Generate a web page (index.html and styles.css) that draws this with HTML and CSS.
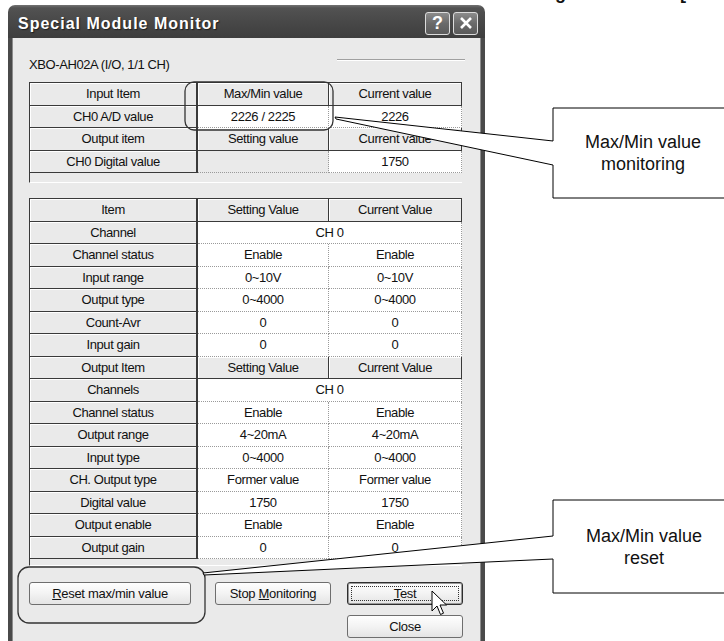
FILE: index.html
```html
<!DOCTYPE html>
<html>
<head>
<meta charset="utf-8">
<title>Special Module Monitor</title>
<link rel="stylesheet" href="styles.css">
</head>
<body>
<div class="page">
  <div class="pagehead">
    <div class="pagehead-line"><span>Monitoring</span><span>[</span></div>
  </div>
  <div class="window">
    <div class="titlebar">
      <span class="title">Special Module Monitor</span>
      <div class="tbtns">
        <span class="tbtn">?</span>
        <span class="tbtn"><svg width="22" height="21" viewBox="0 0 22 21"><path d="M6 5 L16 15 M16 5 L6 15" stroke="#fff" stroke-width="2.6" fill="none"/></svg></span>
      </div>
    </div>
    <div class="wbody">
      <div class="modrow">
        <span class="modname">XBO-AH02A (I/O, 1/1 CH)</span>
        <span class="modline"></span>
      </div>

      <div class="panel p1">
        <div class="grid">
          <div class="c g c1">Input Item</div><div class="c g">Max/Min value</div><div class="c g">Current value</div>
          <div class="c g c1">CH0 A/D value</div><div class="c w">2226 / 2225</div><div class="c w">2226</div>
          <div class="c g c1">Output item</div><div class="c g">Setting value</div><div class="c g">Current value</div>
          <div class="c g c1">CH0 Digital value</div><div class="c e"></div><div class="c w">1750</div>
        </div>
      </div>

      <div class="panel p2">
        <div class="grid">
          <div class="c g c1">Item</div><div class="c g">Setting Value</div><div class="c g">Current Value</div>
          <div class="c g c1">Channel</div><div class="c w span2">CH 0</div>
          <div class="c g c1">Channel status</div><div class="c w">Enable</div><div class="c w">Enable</div>
          <div class="c g c1">Input range</div><div class="c w">0~10V</div><div class="c w">0~10V</div>
          <div class="c g c1">Output type</div><div class="c w">0~4000</div><div class="c w">0~4000</div>
          <div class="c g c1">Count-Avr</div><div class="c w">0</div><div class="c w">0</div>
          <div class="c g c1">Input gain</div><div class="c w">0</div><div class="c w">0</div>
          <div class="c g c1">Output Item</div><div class="c g">Setting Value</div><div class="c g">Current Value</div>
          <div class="c g c1">Channels</div><div class="c w span2">CH 0</div>
          <div class="c g c1">Channel status</div><div class="c w">Enable</div><div class="c w">Enable</div>
          <div class="c g c1">Output range</div><div class="c w">4~20mA</div><div class="c w">4~20mA</div>
          <div class="c g c1">Input type</div><div class="c w">0~4000</div><div class="c w">0~4000</div>
          <div class="c g c1">CH. Output type</div><div class="c w">Former value</div><div class="c w">Former value</div>
          <div class="c g c1">Digital value</div><div class="c w">1750</div><div class="c w">1750</div>
          <div class="c g c1">Output enable</div><div class="c w">Enable</div><div class="c w">Enable</div>
          <div class="c g c1">Output gain</div><div class="c w">0</div><div class="c w">0</div>
        </div>
      </div>

      <div class="buttons">
        <div class="btn"><span><u>R</u>eset max/min value</span></div>
        <div class="btn"><span>Stop <u>M</u>onitoring</span></div>
        <div class="btn def"><span><u>T</u>est</span></div>
        <div class="btn close"><span>Close</span></div>
      </div>
    </div>
  </div>

  <svg class="callouts" width="724" height="641" viewBox="0 0 724 641">
    <rect x="185" y="82" width="148" height="48" rx="9" ry="9" fill="none" stroke="#333" stroke-width="1.3"/>
    <path d="M335 117 L553 141 L553 108 L740 108 L740 198 L553 198 L553 165 L336 119 Z" fill="#fff" stroke="#000" stroke-width="1"/>
    <rect x="18" y="567" width="187" height="56" rx="11" ry="11" fill="none" stroke="#333" stroke-width="1.3"/>
    <path d="M203 573 L553 536 L553 500 L740 500 L740 593 L553 593 L553 559 L204 575 Z" fill="#fff" stroke="#000" stroke-width="1"/>
  </svg>
  <div class="note n1">Max/Min value<br>monitoring</div>
  <div class="note n2">Max/Min value<br>reset</div>
  <svg class="cursor" width="17" height="26" viewBox="0 0 17 26">
    <path d="M1 1 L1 21 L6 16 L9.5 24.5 L12.5 23.2 L9 15 L15.5 15 Z" fill="#fff" stroke="#000" stroke-width="1"/>
  </svg>
</div>
</body>
</html>
```

FILE: styles.css
```css
* { box-sizing: border-box; }
html, body { margin: 0; padding: 0; background: #fff; }
body {
  width: 724px;
  height: 641px;
  overflow: hidden;
  font-family: "Liberation Sans", Arial, sans-serif;
}
.page {
  position: relative;
  width: 724px;
  height: 641px;
  overflow: hidden;
}
.pagehead { height: 5px; overflow: hidden; }
.pagehead-line {
  display: flex;
  margin-top: -16px;
  padding-left: 473px;
  gap: 114px;
  font: bold 18px/18px "Liberation Sans", Arial, sans-serif;
  color: #111;
  white-space: nowrap;
}
.window {
  margin-left: 8px;
  width: 477px;
  height: 640px;
  display: flex;
  flex-direction: column;
}
.titlebar {
  height: 33px;
  flex: none;
  border-radius: 7px 7px 0 0;
  background: linear-gradient(#727272, #525252 3px, #474747 55%, #3e3e3e);
  display: flex;
  align-items: flex-start;
  padding: 0 7px 0 10px;
}
.title {
  flex: 1;
  margin-top: 9px;
  color: #fff;
  font: bold 16px/20px "Liberation Sans", Arial, sans-serif;
  letter-spacing: 1px;
  text-shadow: 1px 1px 1px #1e1e1e;
}
.tbtns { display: flex; gap: 3px; margin-top: 7px; }
.tbtn {
  width: 25px;
  height: 23px;
  border: 1px solid #dcdcdc;
  border-radius: 3px;
  background: linear-gradient(#8c8c8c, #6a6a6a 50%, #5a5a5a);
  color: #fff;
  font: bold 18px/21px "Liberation Sans", Arial, sans-serif;
  text-align: center;
  display: flex;
  align-items: center;
  justify-content: center;
}
.wbody {
  flex: 1;
  background: #eaeaea;
  border-left: 4px solid #4a4a4a;
  border-right: 4px solid #4a4a4a;
  box-shadow: inset 1px 0 0 #8c8c8c, inset -1px 0 0 #8c8c8c;
  padding-left: 17px;
}
.modrow {
  display: flex;
  width: 436px;
  height: 16px;
  margin-top: 19px;
  font-size: 13px;
  line-height: 16px;
  letter-spacing: -0.4px;
  color: #111;
}
.modline {
  width: 128px;
  margin-left: auto;
  margin-top: 2px;
  height: 2px;
  border-top: 1px solid #a0a0a0;
  border-bottom: 1px solid #fff;
}
.panel {
  width: 433px;
  background: #eaeaea;
  border-left: 1px solid #3a3a3a;
  border-top: 1px solid #3a3a3a;
  border-bottom: 1px solid #fff;
}
.p1 { margin-top: 9px; padding-bottom: 9px; }
.p2 { margin-top: 15px; padding-bottom: 6px; }
.grid {
  display: grid;
  grid-template-columns: 168px 131px 133px;
  grid-auto-rows: 22.5px;
}
.c {
  display: flex;
  align-items: center;
  justify-content: center;
  font-size: 13px;
  letter-spacing: -0.4px;
  color: #111;
  white-space: nowrap;
}
.g {
  background: #eaeaea;
  border-right: 1px solid #3a3a3a;
  border-bottom: 1px solid #3a3a3a;
  box-shadow: inset 1px 1px 0 #fff;
}
.g.c1 { border-right-width: 2px; }
.w {
  background: #fff;
  border-right: 1px dotted #9a9a9a;
  border-bottom: 1px dotted #9a9a9a;
}
.e {
  background: #eaeaea;
  border-right: 1px dotted #9a9a9a;
  border-bottom: 1px dotted #9a9a9a;
}
.span2 { grid-column: span 2; }
.buttons {
  display: grid;
  grid-template-columns: 162px 116px 116px;
  grid-template-rows: 23px 23px;
  column-gap: 24px;
  row-gap: 10px;
  margin-top: 16px;
}
.buttons .btn:nth-child(3) { margin-left: -8px; width: 116px; }
.btn {
  height: 23px;
  border: 1px solid #6e6e6e;
  border-radius: 3px;
  background: linear-gradient(#fefefe, #f3f3f3 50%, #e4e4e4);
  display: flex;
  align-items: center;
  justify-content: center;
  font-size: 13px;
  letter-spacing: -0.3px;
  color: #111;
}
.btn.def {
  position: relative;
  border: 1px solid #2e2e2e;
  box-shadow: inset 0 0 0 1px #9a9a9a;
}
.btn.def::after {
  content: "";
  position: absolute;
  left: 3px; top: 3px; right: 3px; bottom: 3px;
  border: 1px dotted #333;
}
.btn.close { grid-column: 3; grid-row: 2; margin-left: -8px; width: 116px; }
.callouts {
  position: absolute;
  left: 0;
  top: 0;
  pointer-events: none;
}
.note {
  position: absolute;
  display: flex;
  align-items: center;
  justify-content: center;
  text-align: center;
  font: 18px/22px "Liberation Sans", Arial, sans-serif;
  color: #111;
}
.n1 { left: 553px; top: 108px; width: 180px; height: 90px; }
.n2 { left: 553px; top: 500px; width: 182px; height: 93px; }
.cursor {
  position: absolute;
  left: 431px;
  top: 590px;
}
```
